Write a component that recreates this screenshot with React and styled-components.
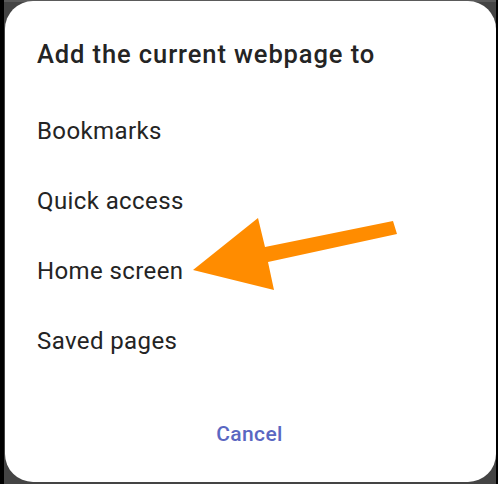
import React from "react";
import styled, { createGlobalStyle } from "styled-components";

const Global = createGlobalStyle`
  html, body { margin: 0; padding: 0; background: #000; }
  #root { width: 498px; height: 484px; }
`;

const Frame = styled.div`
  position: relative;
  width: 498px;
  height: 484px;
  box-sizing: border-box;
  background: #000;
  padding: 0 2px 0 4px;
  overflow: hidden;
`;

const Backdrop = styled.div`
  height: 100%;
  box-sizing: border-box;
  background: linear-gradient(to bottom, #5a5a5a 0, #5a5a5a 2px, #444 2px);
  padding: 1px 0 2px 1px;
`;

const Dialog = styled.div`
  height: 100%;
  box-sizing: border-box;
  background: #fff;
  border-radius: 28px;
  padding: 33px 32px 0 32px;
  display: flex;
  flex-direction: column;
  font-family: Roboto, "Liberation Sans", sans-serif;
  color: #242424;
`;

const Title = styled.div`
  font-size: 25.5px;
  font-weight: 500;
  letter-spacing: 0.9px;
  line-height: 40px;
  height: 40px;
  margin-bottom: 22px;
  white-space: nowrap;
`;

const Option = styled.div`
  font-size: 24px;
  letter-spacing: 0.4px;
  line-height: 70px;
  height: 70px;
  white-space: nowrap;
`;

const CancelRow = styled.div`
  margin-top: 38px;
  display: flex;
  justify-content: center;
`;

const CancelButton = styled.div`
  font-size: 21px;
  font-weight: 500;
  letter-spacing: 0.4px;
  line-height: 40px;
  color: #5a67c2;
  margin-right: 2px;
`;

const Overlay = styled.svg`
  position: absolute;
  left: 0;
  top: 0;
  pointer-events: none;
`;

const options = ["Bookmarks", "Quick access", "Home screen", "Saved pages"];

export default function App() {
  return (
    <>
      <Global />
      <Frame>
        <Backdrop>
          <Dialog>
            <Title>Add the current webpage to</Title>
            {options.map((o) => (
              <Option key={o}>{o}</Option>
            ))}
            <CancelRow>
              <CancelButton>Cancel</CancelButton>
            </CancelRow>
          </Dialog>
        </Backdrop>
        <Overlay width="498" height="484" viewBox="0 0 498 484">
          <polygon
            points="193,270 258,218 265,247 393,221 397,234 268,262 274,290"
            fill="#ff8c00"
          />
        </Overlay>
      </Frame>
    </>
  );
}
